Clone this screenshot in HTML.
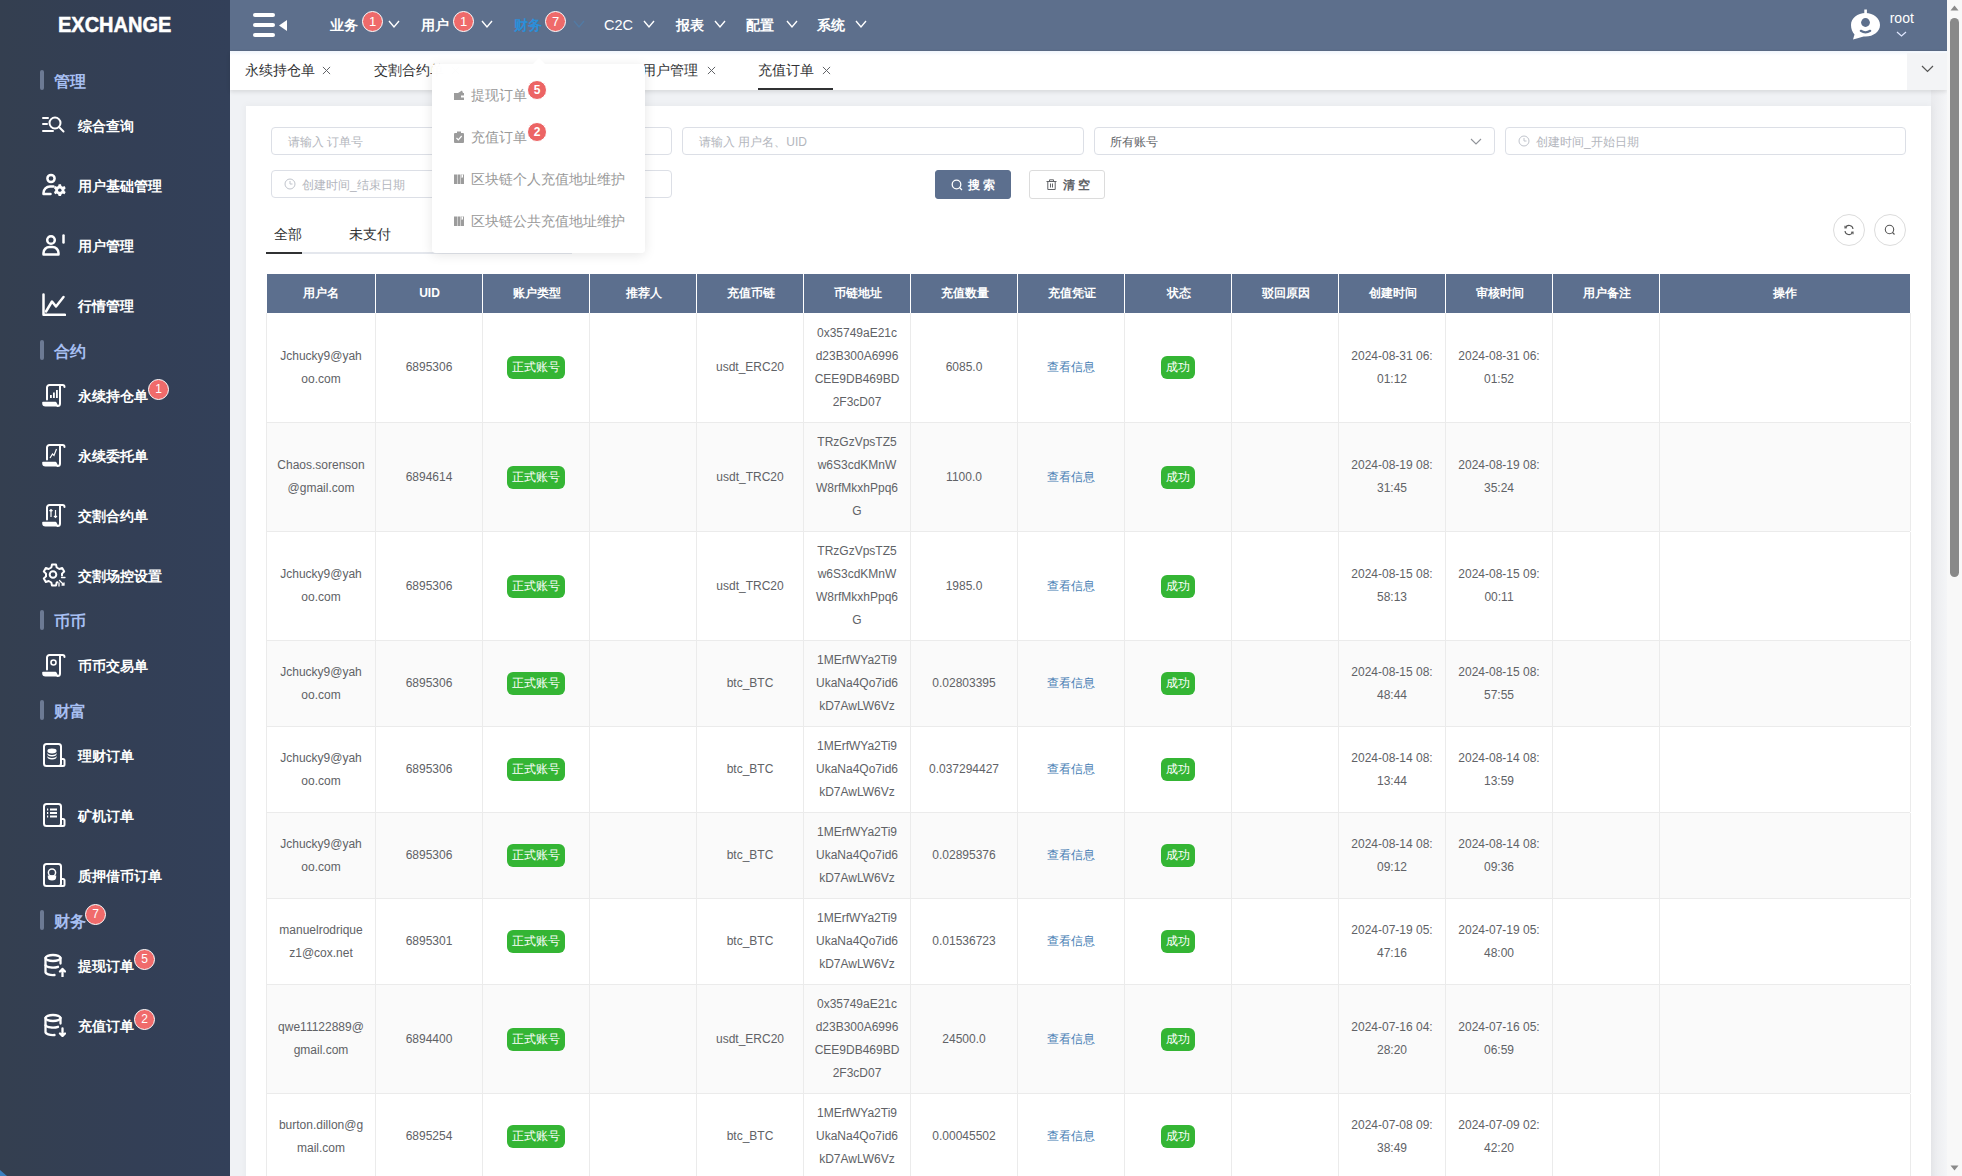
<!DOCTYPE html>
<html><head><meta charset="utf-8"><style>
*{box-sizing:border-box;margin:0;padding:0}
html,body{width:1962px;height:1176px;overflow:hidden;background:#f0f2f5;font-family:"Liberation Sans",sans-serif;color:#606266}
#side{position:absolute;left:0;top:0;width:230px;height:1176px;background:linear-gradient(90deg,#343f50 0%,#333f56 60%,#334059 100%)}
#logo{position:absolute;left:57.8px;top:12.5px;-webkit-text-stroke:0.5px #fff;transform:scaleX(0.93);transform-origin:0 0;font-size:21.5px;font-weight:bold;color:#fff;line-height:24px;white-space:nowrap}
.sec{position:absolute;left:40px;height:30px;width:190px}
.sec .bar{position:absolute;left:0;top:5px;width:4px;height:20px;border-radius:2px;background:#6c7a94}
.sec .t{position:absolute;left:14px;top:7.5px;font-size:16px;line-height:18px;color:#a7bff2;white-space:nowrap;font-weight:bold}
.item{position:absolute;left:0;width:230px;height:60px}
.item svg{position:absolute;left:42px;top:18px}
.item .t{position:absolute;left:78px;top:23px;font-size:14px;line-height:16px;color:#fff;white-space:nowrap;font-weight:bold}
.rb{position:absolute;width:20px;height:20px;border-radius:50%;background:#f06b6b;border:1px solid #fff;color:#fff;font-size:12px;line-height:18px;text-align:center;font-weight:normal}
#hdr{position:absolute;left:230px;top:0;width:1717px;height:51px;background:#5d6f8c;box-shadow:inset 0 -1px 0 rgba(80,80,80,.12)}
.nav{position:absolute;top:16px;font-size:14px;line-height:18px;color:#fff;white-space:nowrap;font-weight:bold}
.chev{position:absolute;top:20px}
#tabs{position:absolute;left:230px;top:51px;width:1717px;height:39px;background:linear-gradient(#f0f5fd 0,#f3f7fc 1px,#fdfeff 4px,#fff 5px);box-shadow:0 2px 4px rgba(0,0,0,.1)}
.tab{position:absolute;top:11px;font-size:14px;line-height:16px;color:#303133;white-space:nowrap}
#card{position:absolute;left:246px;top:106px;width:1685px;height:1100px;background:#fff;box-shadow:0 0 8px rgba(0,0,0,.05)}
#rstrip{position:absolute;left:1931px;top:90px;width:16px;height:1086px;background:linear-gradient(90deg,#e9eaed,#f4f5f7)}
.inp{position:absolute;height:28px;border:1px solid #dcdfe6;border-radius:4px;background:#fff;font-size:12px;color:#b3b6bd;line-height:28px;padding-left:16px;white-space:nowrap}
.btn{position:absolute;height:29px;border-radius:3px;font-size:12px;line-height:28px;white-space:nowrap;text-align:center;letter-spacing:3px;font-weight:bold;padding-top:0px}
.circ{position:absolute;width:32px;height:32px;border-radius:50%;border:1px solid #dcdcdc;background:#fff}
#tbl{position:absolute;left:267px;top:274px;width:1643px}
.th{position:absolute;top:0;height:39px;background:#5c6f8e;color:#fff;font-size:12px;font-weight:bold;line-height:39px;text-align:center;white-space:nowrap}
.tr{position:absolute;left:-1px;width:1644px;border-bottom:1px solid #ebebeb}
.td{position:absolute;top:0;bottom:0;border-right:1px solid #ebebeb;display:flex;align-items:center;justify-content:center;text-align:center;font-size:12px;line-height:23px;color:#606266}
.tag{display:inline-block;height:23px;line-height:23px;border-radius:6px;background:#34b534;color:#fff;font-size:12px;padding:0 5px}
.lnk{color:#4a7fb5}
#dd{position:absolute;left:432px;top:64px;width:213px;height:189px;background:rgba(255,255,255,.99);border-radius:4px;box-shadow:0 2px 12px rgba(0,0,0,.1)}
.ddi{position:absolute;left:21px;font-size:14px;line-height:16px;color:#999;white-space:nowrap}
#scroll{position:absolute;left:1947px;top:0;width:15px;height:1176px;background:#f8f8f8}
</style></head><body>
<div id="rstrip"></div>
<div id="side"><div id="logo">EXCHANGE</div>
<div class="sec" style="top:65px"><div class="bar"></div><div class="t">管理</div></div>
<div class="item" style="top:95px"><svg width="24" height="24" viewBox="0 0 24 24"><path d="M1 5H6M1 11H5M1 18H11" fill="none" stroke="#fff" stroke-width="2" stroke-linecap="round" stroke-linejoin="round"/><circle cx="13" cy="10" r="5.5" fill="none" stroke="#fff" stroke-width="2" stroke-linecap="round" stroke-linejoin="round"/><path d="M17 14L21.5 18.5" fill="none" stroke="#fff" stroke-width="2" stroke-linecap="round" stroke-linejoin="round"/></svg><div class="t">综合查询</div></div>
<div class="item" style="top:155px"><svg width="24" height="24" viewBox="0 0 24 24"><circle cx="9" cy="5.5" r="3.6" fill="none" stroke="#fff" stroke-width="2.5" stroke-linecap="round" stroke-linejoin="round"/><path d="M11.5 13.5H8A6.5 6.5 0 0 0 1.5 20V21H8.5" fill="none" stroke="#fff" stroke-width="2.5" stroke-linecap="round" stroke-linejoin="round"/><path d="M16.6 11.2H19L19.4 12.9L20.8 13.7L22.5 13.1L23.7 15.2L22.4 16.4V17.9L23.7 19.1L22.5 21.2L20.8 20.6L19.4 21.4L19 23.1H16.6L16.2 21.4L14.8 20.6L13.1 21.2L11.9 19.1L13.2 17.9V16.4L11.9 15.2L13.1 13.1L14.8 13.7L16.2 12.9Z" fill="#fff"/><circle cx="17.8" cy="17.15" r="1.7" fill="#334059"/></svg><div class="t">用户基础管理</div></div>
<div class="item" style="top:215px"><svg width="24" height="24" viewBox="0 0 24 24"><circle cx="9" cy="7" r="3.8" fill="none" stroke="#fff" stroke-width="2.5" stroke-linecap="round" stroke-linejoin="round"/><path d="M1.5 21.5V20A6 6 0 0 1 7.5 14H10.5A6 6 0 0 1 16.5 20V21.5Z" fill="none" stroke="#fff" stroke-width="2.5" stroke-linecap="round" stroke-linejoin="round"/><path d="M21.5 2.5V9.5" fill="none" stroke="#fff" stroke-width="2.5" stroke-linecap="round" stroke-linejoin="round"/></svg><div class="t">用户管理</div></div>
<div class="item" style="top:275px"><svg width="24" height="24" viewBox="0 0 24 24"><path d="M1.5 1.5V21.8H23" fill="none" stroke="#fff" stroke-width="2.5" stroke-linecap="round" stroke-linejoin="round"/><path d="M4 18.5L10 8.5L14 13.5L21.5 4" fill="none" stroke="#fff" stroke-width="2.5" stroke-linecap="round" stroke-linejoin="round"/></svg><div class="t">行情管理</div></div>
<div class="sec" style="top:335px"><div class="bar"></div><div class="t">合约</div></div>
<div class="item" style="top:365px"><svg width="24" height="24" viewBox="0 0 24 24"><path d="M5 16.5V4.5A2.5 2.5 0 0 1 7.5 2H20.5A2 2 0 0 1 22.5 4" fill="none" stroke="#fff" stroke-width="2" stroke-linecap="round" stroke-linejoin="round"/><path d="M18 3V20.5A2.5 2.5 0 0 1 15.5 23" fill="none" stroke="#fff" stroke-width="2" stroke-linecap="round" stroke-linejoin="round"/><path d="M1 19.5H13.5L15.5 22.8H3.5A2.5 2.5 0 0 1 1 20.3Z" fill="#fff" stroke="#fff" stroke-width="1.6" stroke-linejoin="round"/><rect x="8" y="12" width="1.8" height="3" fill="#fff"/><rect x="11" y="9.5" width="1.8" height="5.5" fill="#fff"/><rect x="14" y="7" width="1.8" height="8" fill="#fff"/></svg><div class="t">永续持仓单</div><div class="rb" style="left:148px;top:13.5px;width:21px;height:21px;line-height:19px">1</div></div>
<div class="item" style="top:425px"><svg width="24" height="24" viewBox="0 0 24 24"><path d="M5 16.5V4.5A2.5 2.5 0 0 1 7.5 2H20.5A2 2 0 0 1 22.5 4" fill="none" stroke="#fff" stroke-width="2" stroke-linecap="round" stroke-linejoin="round"/><path d="M18 3V20.5A2.5 2.5 0 0 1 15.5 23" fill="none" stroke="#fff" stroke-width="2" stroke-linecap="round" stroke-linejoin="round"/><path d="M1 19.5H13.5L15.5 22.8H3.5A2.5 2.5 0 0 1 1 20.3Z" fill="#fff" stroke="#fff" stroke-width="1.6" stroke-linejoin="round"/><path d="M8 15L10.5 11L12 12.5L14.5 6" fill="none" stroke="#fff" stroke-width="1.2"/></svg><div class="t">永续委托单</div></div>
<div class="item" style="top:485px"><svg width="24" height="24" viewBox="0 0 24 24"><path d="M5 16.5V4.5A2.5 2.5 0 0 1 7.5 2H20.5A2 2 0 0 1 22.5 4" fill="none" stroke="#fff" stroke-width="2" stroke-linecap="round" stroke-linejoin="round"/><path d="M18 3V20.5A2.5 2.5 0 0 1 15.5 23" fill="none" stroke="#fff" stroke-width="2" stroke-linecap="round" stroke-linejoin="round"/><path d="M1 19.5H13.5L15.5 22.8H3.5A2.5 2.5 0 0 1 1 20.3Z" fill="#fff" stroke="#fff" stroke-width="1.6" stroke-linejoin="round"/><path d="M9 14V6.5M7.5 8L9 6.5L10.5 8M13.5 7V14.5M12 13L13.5 14.5L15 13" fill="none" stroke="#fff" stroke-width="1.2"/></svg><div class="t">交割合约单</div></div>
<div class="item" style="top:545px"><svg width="24" height="24" viewBox="0 0 24 24"><path d="M15.5 19.3L14.7 19.5L14 22.5H10L9.3 19.5L6.7 18L3.8 19L1.8 15.5L4 13.4V10.6L1.8 8.5L3.8 5L6.7 6L9.3 4.5L10 1.5H14L14.7 4.5L17.3 6L20.2 5L22.2 8.5L20 10.6V12.5" fill="none" stroke="#fff" stroke-width="2" stroke-linecap="round" stroke-linejoin="round"/><circle cx="11" cy="11.5" r="3.3" fill="none" stroke="#fff" stroke-width="2" stroke-linecap="round" stroke-linejoin="round"/><path d="M17.5 17.5L22 22M20 22H22V20M19.5 14.5L23 14.5M17 20L17 23" fill="none" stroke="#fff" stroke-width="1.3" stroke-linecap="round"/></svg><div class="t">交割场控设置</div></div>
<div class="sec" style="top:605px"><div class="bar"></div><div class="t">币币</div></div>
<div class="item" style="top:635px"><svg width="24" height="24" viewBox="0 0 24 24"><path d="M5 16.5V4.5A2.5 2.5 0 0 1 7.5 2H20.5A2 2 0 0 1 22.5 4" fill="none" stroke="#fff" stroke-width="2" stroke-linecap="round" stroke-linejoin="round"/><path d="M18 3V20.5A2.5 2.5 0 0 1 15.5 23" fill="none" stroke="#fff" stroke-width="2" stroke-linecap="round" stroke-linejoin="round"/><path d="M1 19.5H13.5L15.5 22.8H3.5A2.5 2.5 0 0 1 1 20.3Z" fill="#fff" stroke="#fff" stroke-width="1.6" stroke-linejoin="round"/><circle cx="11.5" cy="9.5" r="2.5" fill="none" stroke="#fff" stroke-width="1.6"/></svg><div class="t">币币交易单</div></div>
<div class="sec" style="top:695px"><div class="bar"></div><div class="t">财富</div></div>
<div class="item" style="top:725px"><svg width="24" height="24" viewBox="0 0 24 24"><rect x="2" y="1" width="17" height="22" rx="2.5" fill="none" stroke="#fff" stroke-width="2" stroke-linecap="round" stroke-linejoin="round"/><path d="M19 16H21A1.5 1.5 0 0 1 22.5 17.5V21.5A1.5 1.5 0 0 1 21 23H17" fill="none" stroke="#fff" stroke-width="2" stroke-linecap="round" stroke-linejoin="round"/><ellipse cx="10" cy="8" rx="4.6" ry="2.4" fill="#fff"/><path d="M5.4 9.5V11A4.6 2.4 0 0 0 14.6 11V9.5A4.6 2.4 0 0 1 5.4 9.5Z" fill="#fff"/><path d="M5.4 12.5V14A4.6 2.4 0 0 0 14.6 14V12.5A4.6 2.4 0 0 1 5.4 12.5Z" fill="#fff"/></svg><div class="t">理财订单</div></div>
<div class="item" style="top:785px"><svg width="24" height="24" viewBox="0 0 24 24"><rect x="2" y="1" width="17" height="22" rx="2.5" fill="none" stroke="#fff" stroke-width="2" stroke-linecap="round" stroke-linejoin="round"/><path d="M19 16H21A1.5 1.5 0 0 1 22.5 17.5V21.5A1.5 1.5 0 0 1 21 23H17" fill="none" stroke="#fff" stroke-width="2" stroke-linecap="round" stroke-linejoin="round"/><path d="M5 6.5H6.2M8 6.5H15M5 10H6.2M8 10H15M5 13.5H6.2M8 13.5H15" stroke="#fff" stroke-width="1.8"/></svg><div class="t">矿机订单</div></div>
<div class="item" style="top:845px"><svg width="24" height="24" viewBox="0 0 24 24"><rect x="2" y="1" width="17" height="22" rx="2.5" fill="none" stroke="#fff" stroke-width="2" stroke-linecap="round" stroke-linejoin="round"/><path d="M19 16H21A1.5 1.5 0 0 1 22.5 17.5V21.5A1.5 1.5 0 0 1 21 23H17" fill="none" stroke="#fff" stroke-width="2" stroke-linecap="round" stroke-linejoin="round"/><circle cx="10" cy="9.5" r="3.6" fill="none" stroke="#fff" stroke-width="1.5"/><path d="M5.8 12.5H14.2V14A4.2 3.5 0 0 1 5.8 14Z" fill="#fff"/></svg><div class="t">质押借币订单</div></div>
<div class="sec" style="top:905px"><div class="bar"></div><div class="t">财务</div><div class="rb" style="left:45px;top:-1px;width:21px;height:21px;line-height:19px">7</div></div>
<div class="item" style="top:935px"><svg width="24" height="24" viewBox="0 0 24 24"><ellipse cx="11" cy="5" rx="7.5" ry="3" fill="none" stroke="#fff" stroke-width="2.3" stroke-linecap="round" stroke-linejoin="round"/><path d="M3.5 5V19A7.5 3 0 0 0 12.5 22" fill="none" stroke="#fff" stroke-width="2.3" stroke-linecap="round" stroke-linejoin="round"/><path d="M3.5 12.2A7.5 3 0 0 0 16 13.8" fill="none" stroke="#fff" stroke-width="2.3" stroke-linecap="round" stroke-linejoin="round"/><path d="M18.5 5V10.5" fill="none" stroke="#fff" stroke-width="2.3" stroke-linecap="round" stroke-linejoin="round"/><path d="M20.5 23.5V16M18 18.5L20.5 16L23 18.5" fill="none" stroke="#fff" stroke-width="2.3" stroke-linecap="round" stroke-linejoin="round"/></svg><div class="t">提现订单</div><div class="rb" style="left:134px;top:13.5px;width:21px;height:21px;line-height:19px">5</div></div>
<div class="item" style="top:995px"><svg width="24" height="24" viewBox="0 0 24 24"><ellipse cx="11" cy="5" rx="7.5" ry="3" fill="none" stroke="#fff" stroke-width="2.3" stroke-linecap="round" stroke-linejoin="round"/><path d="M3.5 5V19A7.5 3 0 0 0 12.5 22" fill="none" stroke="#fff" stroke-width="2.3" stroke-linecap="round" stroke-linejoin="round"/><path d="M3.5 12.2A7.5 3 0 0 0 16 13.8" fill="none" stroke="#fff" stroke-width="2.3" stroke-linecap="round" stroke-linejoin="round"/><path d="M18.5 5V10.5" fill="none" stroke="#fff" stroke-width="2.3" stroke-linecap="round" stroke-linejoin="round"/><path d="M20.5 15.5V23M18 20.5L20.5 23L23 20.5" fill="none" stroke="#fff" stroke-width="2.3" stroke-linecap="round" stroke-linejoin="round"/></svg><div class="t">充值订单</div><div class="rb" style="left:134px;top:13.5px;width:21px;height:21px;line-height:19px">2</div></div>
</div>
<div id="hdr">
<svg style="position:absolute;left:23px;top:12px" width="36" height="27" viewBox="0 0 36 27"><rect x="0" y="1" width="22" height="4" rx="2" fill="#fff"/><rect x="0" y="11" width="22" height="4" rx="2" fill="#fff"/><rect x="0" y="21" width="22" height="4" rx="2" fill="#fff"/><path d="M34 8V19L26 13.5Z" fill="#fff"/></svg>
<div class="nav" style="left:100px;color:#fff;">业务</div>
<div class="rb" style="left:132.0px;top:11px;width:21px;height:21px;line-height:19px;font-size:13px;background:#ef6a6a">1</div>
<svg class="chev" style="left:158px;top:20px" width="12" height="9" viewBox="0 0 12 9"><path d="M1 1L6.0 7L11 1" fill="none" stroke="#fff" stroke-width="1.4"/></svg>
<div class="nav" style="left:191px;color:#fff;">用户</div>
<div class="rb" style="left:223.0px;top:11px;width:21px;height:21px;line-height:19px;font-size:13px;background:#ef6a6a">1</div>
<svg class="chev" style="left:251px;top:20px" width="12" height="9" viewBox="0 0 12 9"><path d="M1 1L6.0 7L11 1" fill="none" stroke="#fff" stroke-width="1.4"/></svg>
<div class="nav" style="left:284px;color:#2b8ed8;">财务</div>
<div class="rb" style="left:315.0px;top:11px;width:21px;height:21px;line-height:19px;font-size:13px;background:#ef6a6a">7</div>
<svg class="chev" style="left:343px;top:20px" width="12" height="9" viewBox="0 0 12 9"><path d="M1 1L6.0 7L11 1" fill="none" stroke="rgba(60,150,220,.3)" stroke-width="1.4"/></svg>
<div class="nav" style="left:374px;color:#fff;font-size:14.5px;font-weight:normal;">C2C</div>
<svg class="chev" style="left:413px;top:20px" width="12" height="9" viewBox="0 0 12 9"><path d="M1 1L6.0 7L11 1" fill="none" stroke="#fff" stroke-width="1.4"/></svg>
<div class="nav" style="left:446px;color:#fff;">报表</div>
<svg class="chev" style="left:484px;top:20px" width="12" height="9" viewBox="0 0 12 9"><path d="M1 1L6.0 7L11 1" fill="none" stroke="#fff" stroke-width="1.4"/></svg>
<div class="nav" style="left:516px;color:#fff;">配置</div>
<svg class="chev" style="left:556px;top:20px" width="12" height="9" viewBox="0 0 12 9"><path d="M1 1L6.0 7L11 1" fill="none" stroke="#fff" stroke-width="1.4"/></svg>
<div class="nav" style="left:587px;color:#fff;">系统</div>
<svg class="chev" style="left:625px;top:20px" width="12" height="9" viewBox="0 0 12 9"><path d="M1 1L6.0 7L11 1" fill="none" stroke="#fff" stroke-width="1.4"/></svg>
<svg style="position:absolute;left:1620px;top:9px" width="32" height="32" viewBox="0 0 32 32"><path d="M15.5 4C23.5 4 30 9.4 30 16C30 22.6 23.5 27.5 15.5 27.5C13 27.5 10.5 28.2 8.5 29L3 30.5L4.5 25.5C2.3 23 1 19.8 1 16C1 9.4 7.5 4 15.5 4Z" fill="#fff"/><rect x="14.3" y="0.5" width="2.6" height="5" fill="#fff"/><circle cx="15.5" cy="13.5" r="4.4" fill="#5d6f8c"/><path d="M10.8 21.8Q15.5 24.8 20.2 21.8" fill="none" stroke="#5d6f8c" stroke-width="2.2" stroke-linecap="round"/></svg>
<div style="position:absolute;left:1659.7px;top:10px;font-size:14px;line-height:16px;color:#fff">root</div>
<svg class="chev" style="left:1666px;top:31px" width="11" height="7" viewBox="0 0 11 7"><path d="M1 1L5.5 5L10 1" fill="none" stroke="#e0e8ff" stroke-width="1.2"/></svg>
</div>
<div id="tabs">
<div class="tab" style="left:15px">永续持仓单</div>
<svg style="position:absolute;left:92px;top:15px" width="9" height="9" viewBox="0 0 10 10"><path d="M1 1L9 9M9 1L1 9" stroke="#606266" stroke-width="1.1"/></svg>
<div class="tab" style="left:144px">交割合约单</div>
<svg style="position:absolute;left:221px;top:15px" width="9" height="9" viewBox="0 0 10 10"><path d="M1 1L9 9M9 1L1 9" stroke="#606266" stroke-width="1.1"/></svg>
<div class="tab" style="left:412px">用户管理</div>
<svg style="position:absolute;left:477px;top:15px" width="9" height="9" viewBox="0 0 10 10"><path d="M1 1L9 9M9 1L1 9" stroke="#606266" stroke-width="1.1"/></svg>
<div class="tab" style="left:528px">充值订单</div>
<svg style="position:absolute;left:592px;top:15px" width="9" height="9" viewBox="0 0 10 10"><path d="M1 1L9 9M9 1L1 9" stroke="#606266" stroke-width="1.1"/></svg>
<div style="position:absolute;left:528px;top:37px;width:75px;height:2px;background:#303133"></div>
<div style="position:absolute;left:1677px;top:2px;width:40px;height:37px;background:#f3f4f6"></div>
<svg style="position:absolute;left:1691px;top:14px" width="13" height="8" viewBox="0 0 13 8"><path d="M1 1L6.5 6.5L12 1" fill="none" stroke="#555" stroke-width="1.2"/></svg>
</div>
<div id="card">
<div class="inp" style="left:25px;top:21px;width:401px;padding-left:16px;color:#b3b6bd">请输入 订单号</div>
<div class="inp" style="left:436px;top:21px;width:402px;padding-left:16px;color:#b3b6bd">请输入 用户名、UID</div>
<div class="inp" style="left:848px;top:21px;width:401px;padding-left:15px;color:#606266">所有账号<svg style="position:absolute;right:12px;top:10px" width="12" height="8" viewBox="0 0 12 8"><path d="M1 1L6 6L11 1" fill="none" stroke="#909399" stroke-width="1.1"/></svg></div>
<div class="inp" style="left:1259px;top:21px;width:401px;padding-left:30px;color:#b3b6bd">创建时间_开始日期<svg style="position:absolute;left:12px;top:7px" width="12" height="12" viewBox="0 0 12 12"><circle cx="6" cy="6" r="5" fill="none" stroke="#c0c4cc" stroke-width="1"/><path d="M6 3V6H8.5" fill="none" stroke="#c0c4cc" stroke-width="1"/></svg></div>
<div class="inp" style="left:25px;top:64px;width:401px;padding-left:30px;color:#b3b6bd">创建时间_结束日期<svg style="position:absolute;left:12px;top:7px" width="12" height="12" viewBox="0 0 12 12"><circle cx="6" cy="6" r="5" fill="none" stroke="#c0c4cc" stroke-width="1"/><path d="M6 3V6H8.5" fill="none" stroke="#c0c4cc" stroke-width="1"/></svg></div>
<div class="btn" style="left:689px;top:64px;width:76px;background:#5c6f8e;color:#fff;border:1px solid #5c6f8e;padding-left:20px"><svg style="position:absolute;left:15px;top:7.5px" width="12" height="12" viewBox="0 0 12 12"><circle cx="5.5" cy="5.5" r="4.3" fill="none" stroke="#fff" stroke-width="1.3"/><path d="M8.6 8.6L11 11" stroke="#fff" stroke-width="1.3"/></svg>搜索</div>
<div class="btn" style="left:783px;top:64px;width:76px;background:#fff;color:#606266;border:1px solid #dcdcdc;padding-left:22px"><svg style="position:absolute;left:16px;top:8px" width="11" height="12" viewBox="0 0 11 12"><path d="M0.5 2.5H10.5M3.5 2.5V0.8H7.5V2.5M1.8 2.5V10.5H9.2V2.5M4.5 4.5V8.5M6.5 4.5V8.5" fill="none" stroke="#606266" stroke-width="1"/></svg>清空</div>
<div style="position:absolute;left:28px;top:120px;font-size:14px;line-height:16px;color:#303133">全部</div>
<div style="position:absolute;left:103px;top:120px;font-size:14px;line-height:16px;color:#303133">未支付</div>
<div style="position:absolute;left:20px;top:146px;width:306px;height:2px;background:#e4e7ed"></div>
<div style="position:absolute;left:20px;top:146px;width:36px;height:2px;background:#303133"></div>
<div class="circ" style="left:1587px;top:108px"><svg style="position:absolute;left:9px;top:9px;transform:scaleX(-1)" width="12" height="12" viewBox="0 0 12 12"><path d="M2 5A4 4 0 0 1 9.5 3.5M10 7A4 4 0 0 1 2.5 8.5" fill="none" stroke="#555" stroke-width="1.1"/><path d="M8 3.8L10 4L10 1.8M4 8.2L2 8L2 10.2" fill="none" stroke="#555" stroke-width="1.1"/></svg></div>
<div class="circ" style="left:1628px;top:108px"><svg style="position:absolute;left:9px;top:9px" width="12" height="12" viewBox="0 0 12 12"><circle cx="5.5" cy="5.5" r="4.2" fill="none" stroke="#555" stroke-width="1.1"/><path d="M8.5 8.5L10.5 10.5" stroke="#555" stroke-width="1.1"/></svg></div>
</div>
<div id="tbl">
<div class="th" style="left:0px;width:108px">用户名</div>
<div style="position:absolute;left:108px;top:0;width:1px;height:39px;background:#fff"></div>
<div class="th" style="left:109px;width:107px">UID</div>
<div style="position:absolute;left:215px;top:0;width:1px;height:39px;background:#fff"></div>
<div class="th" style="left:216px;width:107px">账户类型</div>
<div style="position:absolute;left:322px;top:0;width:1px;height:39px;background:#fff"></div>
<div class="th" style="left:323px;width:107px">推荐人</div>
<div style="position:absolute;left:429px;top:0;width:1px;height:39px;background:#fff"></div>
<div class="th" style="left:430px;width:107px">充值币链</div>
<div style="position:absolute;left:536px;top:0;width:1px;height:39px;background:#fff"></div>
<div class="th" style="left:537px;width:107px">币链地址</div>
<div style="position:absolute;left:643px;top:0;width:1px;height:39px;background:#fff"></div>
<div class="th" style="left:644px;width:107px">充值数量</div>
<div style="position:absolute;left:750px;top:0;width:1px;height:39px;background:#fff"></div>
<div class="th" style="left:751px;width:107px">充值凭证</div>
<div style="position:absolute;left:857px;top:0;width:1px;height:39px;background:#fff"></div>
<div class="th" style="left:858px;width:107px">状态</div>
<div style="position:absolute;left:964px;top:0;width:1px;height:39px;background:#fff"></div>
<div class="th" style="left:965px;width:107px">驳回原因</div>
<div style="position:absolute;left:1071px;top:0;width:1px;height:39px;background:#fff"></div>
<div class="th" style="left:1072px;width:107px">创建时间</div>
<div style="position:absolute;left:1178px;top:0;width:1px;height:39px;background:#fff"></div>
<div class="th" style="left:1179px;width:107px">审核时间</div>
<div style="position:absolute;left:1285px;top:0;width:1px;height:39px;background:#fff"></div>
<div class="th" style="left:1286px;width:107px">用户备注</div>
<div style="position:absolute;left:1392px;top:0;width:1px;height:39px;background:#fff"></div>
<div class="th" style="left:1393px;width:250px">操作</div>
<div class="tr" style="top:39px;height:110px;background:#fff">
<div class="td" style="left:0px;width:110px;border-left:1px solid #ebebeb"><div>Jchucky9@yah<br>oo.com</div></div>
<div class="td" style="left:110px;width:107px"><div>6895306</div></div>
<div class="td" style="left:217px;width:107px"><div><span class="tag">正式账号</span></div></div>
<div class="td" style="left:324px;width:107px"><div></div></div>
<div class="td" style="left:431px;width:107px"><div>usdt_ERC20</div></div>
<div class="td" style="left:538px;width:107px"><div>0x35749aE21c<br>d23B300A6996<br>CEE9DB469BD<br>2F3cD07</div></div>
<div class="td" style="left:645px;width:107px"><div>6085.0</div></div>
<div class="td" style="left:752px;width:107px"><div><span class="lnk">查看信息</span></div></div>
<div class="td" style="left:859px;width:107px"><div><span class="tag" style="padding:0 5px">成功</span></div></div>
<div class="td" style="left:966px;width:107px"><div></div></div>
<div class="td" style="left:1073px;width:107px"><div>2024-08-31 06:<br>01:12</div></div>
<div class="td" style="left:1180px;width:107px"><div>2024-08-31 06:<br>01:52</div></div>
<div class="td" style="left:1287px;width:107px"><div></div></div>
<div class="td" style="left:1394px;width:251px"><div></div></div>
</div>
<div class="tr" style="top:149px;height:109px;background:#fafafa">
<div class="td" style="left:0px;width:110px;border-left:1px solid #ebebeb"><div>Chaos.sorenson<br>@gmail.com</div></div>
<div class="td" style="left:110px;width:107px"><div>6894614</div></div>
<div class="td" style="left:217px;width:107px"><div><span class="tag">正式账号</span></div></div>
<div class="td" style="left:324px;width:107px"><div></div></div>
<div class="td" style="left:431px;width:107px"><div>usdt_TRC20</div></div>
<div class="td" style="left:538px;width:107px"><div>TRzGzVpsTZ5<br>w6S3cdKMnW<br>W8rfMkxhPpq6<br>G</div></div>
<div class="td" style="left:645px;width:107px"><div>1100.0</div></div>
<div class="td" style="left:752px;width:107px"><div><span class="lnk">查看信息</span></div></div>
<div class="td" style="left:859px;width:107px"><div><span class="tag" style="padding:0 5px">成功</span></div></div>
<div class="td" style="left:966px;width:107px"><div></div></div>
<div class="td" style="left:1073px;width:107px"><div>2024-08-19 08:<br>31:45</div></div>
<div class="td" style="left:1180px;width:107px"><div>2024-08-19 08:<br>35:24</div></div>
<div class="td" style="left:1287px;width:107px"><div></div></div>
<div class="td" style="left:1394px;width:251px"><div></div></div>
</div>
<div class="tr" style="top:258px;height:109px;background:#fff">
<div class="td" style="left:0px;width:110px;border-left:1px solid #ebebeb"><div>Jchucky9@yah<br>oo.com</div></div>
<div class="td" style="left:110px;width:107px"><div>6895306</div></div>
<div class="td" style="left:217px;width:107px"><div><span class="tag">正式账号</span></div></div>
<div class="td" style="left:324px;width:107px"><div></div></div>
<div class="td" style="left:431px;width:107px"><div>usdt_TRC20</div></div>
<div class="td" style="left:538px;width:107px"><div>TRzGzVpsTZ5<br>w6S3cdKMnW<br>W8rfMkxhPpq6<br>G</div></div>
<div class="td" style="left:645px;width:107px"><div>1985.0</div></div>
<div class="td" style="left:752px;width:107px"><div><span class="lnk">查看信息</span></div></div>
<div class="td" style="left:859px;width:107px"><div><span class="tag" style="padding:0 5px">成功</span></div></div>
<div class="td" style="left:966px;width:107px"><div></div></div>
<div class="td" style="left:1073px;width:107px"><div>2024-08-15 08:<br>58:13</div></div>
<div class="td" style="left:1180px;width:107px"><div>2024-08-15 09:<br>00:11</div></div>
<div class="td" style="left:1287px;width:107px"><div></div></div>
<div class="td" style="left:1394px;width:251px"><div></div></div>
</div>
<div class="tr" style="top:367px;height:86px;background:#fafafa">
<div class="td" style="left:0px;width:110px;border-left:1px solid #ebebeb"><div>Jchucky9@yah<br>oo.com</div></div>
<div class="td" style="left:110px;width:107px"><div>6895306</div></div>
<div class="td" style="left:217px;width:107px"><div><span class="tag">正式账号</span></div></div>
<div class="td" style="left:324px;width:107px"><div></div></div>
<div class="td" style="left:431px;width:107px"><div>btc_BTC</div></div>
<div class="td" style="left:538px;width:107px"><div>1MErfWYa2Ti9<br>UkaNa4Qo7id6<br>kD7AwLW6Vz</div></div>
<div class="td" style="left:645px;width:107px"><div>0.02803395</div></div>
<div class="td" style="left:752px;width:107px"><div><span class="lnk">查看信息</span></div></div>
<div class="td" style="left:859px;width:107px"><div><span class="tag" style="padding:0 5px">成功</span></div></div>
<div class="td" style="left:966px;width:107px"><div></div></div>
<div class="td" style="left:1073px;width:107px"><div>2024-08-15 08:<br>48:44</div></div>
<div class="td" style="left:1180px;width:107px"><div>2024-08-15 08:<br>57:55</div></div>
<div class="td" style="left:1287px;width:107px"><div></div></div>
<div class="td" style="left:1394px;width:251px"><div></div></div>
</div>
<div class="tr" style="top:453px;height:86px;background:#fff">
<div class="td" style="left:0px;width:110px;border-left:1px solid #ebebeb"><div>Jchucky9@yah<br>oo.com</div></div>
<div class="td" style="left:110px;width:107px"><div>6895306</div></div>
<div class="td" style="left:217px;width:107px"><div><span class="tag">正式账号</span></div></div>
<div class="td" style="left:324px;width:107px"><div></div></div>
<div class="td" style="left:431px;width:107px"><div>btc_BTC</div></div>
<div class="td" style="left:538px;width:107px"><div>1MErfWYa2Ti9<br>UkaNa4Qo7id6<br>kD7AwLW6Vz</div></div>
<div class="td" style="left:645px;width:107px"><div>0.037294427</div></div>
<div class="td" style="left:752px;width:107px"><div><span class="lnk">查看信息</span></div></div>
<div class="td" style="left:859px;width:107px"><div><span class="tag" style="padding:0 5px">成功</span></div></div>
<div class="td" style="left:966px;width:107px"><div></div></div>
<div class="td" style="left:1073px;width:107px"><div>2024-08-14 08:<br>13:44</div></div>
<div class="td" style="left:1180px;width:107px"><div>2024-08-14 08:<br>13:59</div></div>
<div class="td" style="left:1287px;width:107px"><div></div></div>
<div class="td" style="left:1394px;width:251px"><div></div></div>
</div>
<div class="tr" style="top:539px;height:86px;background:#fafafa">
<div class="td" style="left:0px;width:110px;border-left:1px solid #ebebeb"><div>Jchucky9@yah<br>oo.com</div></div>
<div class="td" style="left:110px;width:107px"><div>6895306</div></div>
<div class="td" style="left:217px;width:107px"><div><span class="tag">正式账号</span></div></div>
<div class="td" style="left:324px;width:107px"><div></div></div>
<div class="td" style="left:431px;width:107px"><div>btc_BTC</div></div>
<div class="td" style="left:538px;width:107px"><div>1MErfWYa2Ti9<br>UkaNa4Qo7id6<br>kD7AwLW6Vz</div></div>
<div class="td" style="left:645px;width:107px"><div>0.02895376</div></div>
<div class="td" style="left:752px;width:107px"><div><span class="lnk">查看信息</span></div></div>
<div class="td" style="left:859px;width:107px"><div><span class="tag" style="padding:0 5px">成功</span></div></div>
<div class="td" style="left:966px;width:107px"><div></div></div>
<div class="td" style="left:1073px;width:107px"><div>2024-08-14 08:<br>09:12</div></div>
<div class="td" style="left:1180px;width:107px"><div>2024-08-14 08:<br>09:36</div></div>
<div class="td" style="left:1287px;width:107px"><div></div></div>
<div class="td" style="left:1394px;width:251px"><div></div></div>
</div>
<div class="tr" style="top:625px;height:86px;background:#fff">
<div class="td" style="left:0px;width:110px;border-left:1px solid #ebebeb"><div>manuelrodrique<br>z1@cox.net</div></div>
<div class="td" style="left:110px;width:107px"><div>6895301</div></div>
<div class="td" style="left:217px;width:107px"><div><span class="tag">正式账号</span></div></div>
<div class="td" style="left:324px;width:107px"><div></div></div>
<div class="td" style="left:431px;width:107px"><div>btc_BTC</div></div>
<div class="td" style="left:538px;width:107px"><div>1MErfWYa2Ti9<br>UkaNa4Qo7id6<br>kD7AwLW6Vz</div></div>
<div class="td" style="left:645px;width:107px"><div>0.01536723</div></div>
<div class="td" style="left:752px;width:107px"><div><span class="lnk">查看信息</span></div></div>
<div class="td" style="left:859px;width:107px"><div><span class="tag" style="padding:0 5px">成功</span></div></div>
<div class="td" style="left:966px;width:107px"><div></div></div>
<div class="td" style="left:1073px;width:107px"><div>2024-07-19 05:<br>47:16</div></div>
<div class="td" style="left:1180px;width:107px"><div>2024-07-19 05:<br>48:00</div></div>
<div class="td" style="left:1287px;width:107px"><div></div></div>
<div class="td" style="left:1394px;width:251px"><div></div></div>
</div>
<div class="tr" style="top:711px;height:109px;background:#fafafa">
<div class="td" style="left:0px;width:110px;border-left:1px solid #ebebeb"><div>qwe11122889@<br>gmail.com</div></div>
<div class="td" style="left:110px;width:107px"><div>6894400</div></div>
<div class="td" style="left:217px;width:107px"><div><span class="tag">正式账号</span></div></div>
<div class="td" style="left:324px;width:107px"><div></div></div>
<div class="td" style="left:431px;width:107px"><div>usdt_ERC20</div></div>
<div class="td" style="left:538px;width:107px"><div>0x35749aE21c<br>d23B300A6996<br>CEE9DB469BD<br>2F3cD07</div></div>
<div class="td" style="left:645px;width:107px"><div>24500.0</div></div>
<div class="td" style="left:752px;width:107px"><div><span class="lnk">查看信息</span></div></div>
<div class="td" style="left:859px;width:107px"><div><span class="tag" style="padding:0 5px">成功</span></div></div>
<div class="td" style="left:966px;width:107px"><div></div></div>
<div class="td" style="left:1073px;width:107px"><div>2024-07-16 04:<br>28:20</div></div>
<div class="td" style="left:1180px;width:107px"><div>2024-07-16 05:<br>06:59</div></div>
<div class="td" style="left:1287px;width:107px"><div></div></div>
<div class="td" style="left:1394px;width:251px"><div></div></div>
</div>
<div class="tr" style="top:820px;height:86px;background:#fff">
<div class="td" style="left:0px;width:110px;border-left:1px solid #ebebeb"><div>burton.dillon@g<br>mail.com</div></div>
<div class="td" style="left:110px;width:107px"><div>6895254</div></div>
<div class="td" style="left:217px;width:107px"><div><span class="tag">正式账号</span></div></div>
<div class="td" style="left:324px;width:107px"><div></div></div>
<div class="td" style="left:431px;width:107px"><div>btc_BTC</div></div>
<div class="td" style="left:538px;width:107px"><div>1MErfWYa2Ti9<br>UkaNa4Qo7id6<br>kD7AwLW6Vz</div></div>
<div class="td" style="left:645px;width:107px"><div>0.00045502</div></div>
<div class="td" style="left:752px;width:107px"><div><span class="lnk">查看信息</span></div></div>
<div class="td" style="left:859px;width:107px"><div><span class="tag" style="padding:0 5px">成功</span></div></div>
<div class="td" style="left:966px;width:107px"><div></div></div>
<div class="td" style="left:1073px;width:107px"><div>2024-07-08 09:<br>38:49</div></div>
<div class="td" style="left:1180px;width:107px"><div>2024-07-09 02:<br>42:20</div></div>
<div class="td" style="left:1287px;width:107px"><div></div></div>
<div class="td" style="left:1394px;width:251px"><div></div></div>
</div>
</div>
<div id="dd">
<svg style="position:absolute;left:100px;top:-6px" width="14" height="7" viewBox="0 0 14 7"><path d="M0 7L7 0L14 7Z" fill="#fff"/></svg>
<div style="position:absolute;left:0;top:22.5px;width:213px;height:16px"><svg style="position:absolute;left:21px;top:2px" width="12" height="12" viewBox="0 0 12 12"><path d="M1 4H11V11H1Z" fill="#9c9c9c"/><path d="M5 4L9 1.5L10 4Z" fill="#9c9c9c"/><rect x="8" y="6.5" width="3" height="2" fill="#fff"/></svg><div class="ddi" style="left:39px;top:0">提现订单</div>
<div class="rb" style="left:95px;top:-6.5px;width:20px;height:20px;line-height:18px;font-size:12px;font-weight:bold;background:#ec6464">5</div>
</div>
<div style="position:absolute;left:0;top:65px;width:213px;height:16px"><svg style="position:absolute;left:21px;top:2px" width="12" height="12" viewBox="0 0 12 12"><rect x="1" y="2" width="10" height="10" rx="1" fill="#9c9c9c"/><rect x="4" y="0.5" width="4" height="2.5" fill="#9c9c9c"/><path d="M3.5 7L5.3 8.8L8.7 5" fill="none" stroke="#fff" stroke-width="1.2"/></svg><div class="ddi" style="left:39px;top:0">充值订单</div>
<div class="rb" style="left:95px;top:-7px;width:20px;height:20px;line-height:18px;font-size:12px;font-weight:bold;background:#ec6464">2</div>
</div>
<div style="position:absolute;left:0;top:107px;width:213px;height:16px"><svg style="position:absolute;left:21px;top:2px" width="12" height="12" viewBox="0 0 12 12"><path d="M1 1.5H4V11H1ZM4.5 1.5H7V11H4.5ZM7.5 1.5H11V11H7.5Z" fill="#9c9c9c"/><path d="M8.5 1.5V5L9.3 4.3L10 5V1.5" fill="#fff"/></svg><div class="ddi" style="left:39px;top:0">区块链个人充值地址维护</div>
</div>
<div style="position:absolute;left:0;top:149px;width:213px;height:16px"><svg style="position:absolute;left:21px;top:2px" width="12" height="12" viewBox="0 0 12 12"><path d="M1 1.5H4V11H1ZM4.5 1.5H7V11H4.5ZM7.5 1.5H11V11H7.5Z" fill="#9c9c9c"/><path d="M8.5 1.5V5L9.3 4.3L10 5V1.5" fill="#fff"/></svg><div class="ddi" style="left:39px;top:0">区块链公共充值地址维护</div>
</div>
</div>
<div id="scroll"><svg style="position:absolute;left:3px;top:5px" width="9" height="6" viewBox="0 0 9 6"><path d="M0.5 5.5L4.5 0.5L8.5 5.5Z" fill="#8a8a8a"/></svg><div style="position:absolute;left:3px;top:18px;width:9px;height:559px;border-radius:4.5px;background:#898989"></div><svg style="position:absolute;left:3px;top:1165px" width="9" height="6" viewBox="0 0 9 6"><path d="M0.5 0.5L4.5 5.5L8.5 0.5Z" fill="#8a8a8a"/></svg></div>
<svg style="position:absolute;left:0;top:1168px" width="9" height="8" viewBox="0 0 9 8"><path d="M0 2L7 8H0Z" fill="#3a7fc0"/></svg>
</body></html>
